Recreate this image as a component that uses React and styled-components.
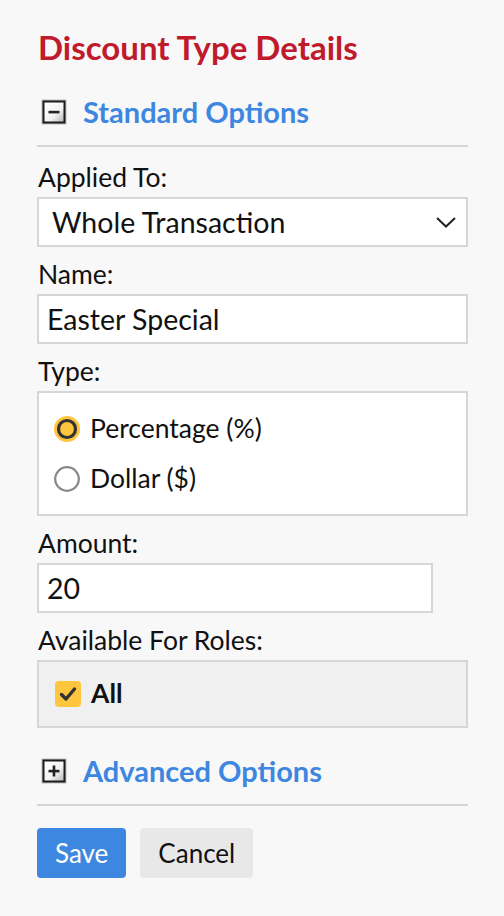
import React, { useState } from 'react'
import styled, { createGlobalStyle } from 'styled-components'

const GlobalStyle = createGlobalStyle`
  html, body {
    margin: 0;
    padding: 0;
    background: #f8f8f8;
  }
  body {
    font-family: Lato, "Open Sans", sans-serif;
    color: #111;
  }
  * { box-sizing: border-box; }
`

const Page = styled.div`
  padding: 27px 36px 40px 37px;
  display: flex;
  flex-direction: column;
`

const Title = styled.h1`
  margin: 0;
  font-size: 33px;
  line-height: 41px;
  font-weight: 700;
  color: #c01a2d;
  padding-left: 1px;
`

const SectionHead = styled.div`
  display: flex;
  align-items: center;
  gap: 16px;
  margin-top: ${p => p.$top}px;
  padding-left: 4px;
  font-size: 29px;
  line-height: 34px;
  font-weight: 700;
  color: #3d87e0;
  cursor: pointer;
`

const Rule = styled.hr`
  border: 0;
  height: 2px;
  background: #d6d6d6;
  margin: 16px 0 0;
`

const Field = styled.div`
  display: flex;
  flex-direction: column;
  margin-top: ${p => p.$top ?? 12}px;
`

const Label = styled.label`
  font-size: 26.5px;
  line-height: 31px;
  margin-bottom: 4px;
  padding-left: 1px;
`

const Box = styled.div`
  border: 2px solid #d6d6d6;
  background: ${p => (p.$grey ? '#f0f0f0' : '#fff')};
  width: ${p => p.$width || '100%'};
`

const SelectBox = styled(Box)`
  height: 50px;
  display: flex;
  align-items: center;
  justify-content: space-between;
  padding: 0 10px 0 13px;
  font-size: 28.5px;
  line-height: 34px;
`

const TextInput = styled.input`
  height: 50px;
  border: 2px solid #d6d6d6;
  background: #fff;
  width: ${p => p.$width || '100%'};
  padding: 0 8px;
  font-family: Lato, "Open Sans", sans-serif;
  font-size: 28.5px;
  color: #111;
  outline: none;
`

const OptionList = styled(Box)`
  display: flex;
  flex-direction: column;
  gap: 19px;
  padding: ${p => p.$pad};
`

const OptionRow = styled.div`
  display: flex;
  align-items: center;
  gap: 10px;
  font-size: 26.5px;
  line-height: 31px;
  font-weight: ${p => (p.$bold ? 700 : 400)};
`

const ButtonRow = styled.div`
  display: flex;
  gap: 14px;
  margin-top: 22px;
`

const Button = styled.button`
  height: 50px;
  padding: 0 18px;
  border: 0;
  border-radius: 4px;
  font-family: Lato, "Open Sans", sans-serif;
  font-size: 26px;
  background: ${p => (p.$primary ? '#3d87e0' : '#e8e8e8')};
  color: ${p => (p.$primary ? '#fff' : '#111')};
`

function ToggleIcon({ open }) {
  const id = open ? 'tg1' : 'tg2'
  return (
    <svg width="26" height="26" viewBox="0 0 26 26">
      <defs>
        <linearGradient id={id} x1="0" y1="0" x2="1" y2="1">
          <stop offset="0" stopColor="#ffffff" />
          <stop offset="0.6" stopColor="#f2f2f2" />
          <stop offset="1" stopColor="#b8b8b8" />
        </linearGradient>
      </defs>
      <rect x="0.5" y="0.5" width="25" height="25" fill="#bbb" />
      <rect x="1.5" y="1.5" width="23" height="23" fill="#1c1c1c" />
      <rect x="3.5" y="3.5" width="19" height="19" fill={`url(#${id})`} />
      <rect x="7.5" y="11.8" width="11" height="2.6" fill="#222" />
      {!open && <rect x="11.7" y="7.5" width="2.6" height="11" fill="#222" />}
    </svg>
  )
}

function Radio({ checked }) {
  return (
    <svg width="26" height="26" viewBox="0 0 26 26">
      {checked ? (
        <>
          <circle cx="13" cy="13" r="13" fill="#fdc63c" />
          <circle cx="13" cy="13" r="8.5" fill="#fdc63c" stroke="#333" strokeWidth="3.2" />
        </>
      ) : (
        <circle cx="13" cy="13" r="11.8" fill="#fff" stroke="#888" strokeWidth="2.2" />
      )}
    </svg>
  )
}

function Check() {
  return (
    <svg width="26" height="26" viewBox="0 0 26 26">
      <rect x="0" y="0" width="26" height="26" rx="4" fill="#fdc63c" />
      <path d="M6.5 13.5 L11 18 L19.5 8" fill="none" stroke="#333" strokeWidth="3.4" strokeLinecap="round" strokeLinejoin="round" />
    </svg>
  )
}

function Chevron() {
  return (
    <svg width="20" height="11" viewBox="0 0 20 11">
      <path d="M1 1 L10 9.5 L19 1" fill="none" stroke="#222" strokeWidth="2" />
    </svg>
  )
}

export default function App() {
  const [type] = useState('percent')
  return (
    <>
      <GlobalStyle />
      <Page>
        <Title>Discount Type Details</Title>

        <SectionHead $top={27}>
          <ToggleIcon open />
          Standard Options
        </SectionHead>
        <Rule />

        <Field $top={15}>
          <Label>Applied To:</Label>
          <SelectBox>
            <span>Whole Transaction</span>
            <Chevron />
          </SelectBox>
        </Field>

        <Field>
          <Label>Name:</Label>
          <TextInput defaultValue="Easter Special" />
        </Field>

        <Field>
          <Label>Type:</Label>
          <OptionList $pad="20px 15px 20px">
            <OptionRow>
              <Radio checked={type === 'percent'} />
              Percentage (%)
            </OptionRow>
            <OptionRow>
              <Radio checked={type === 'dollar'} />
              Dollar ($)
            </OptionRow>
          </OptionList>
        </Field>

        <Field>
          <Label>Amount:</Label>
          <TextInput $width="396px" defaultValue="20" />
        </Field>

        <Field>
          <Label>Available For Roles:</Label>
          <OptionList $grey $pad="16px 16px 17px">
            <OptionRow $bold>
              <Check />
              All
            </OptionRow>
          </OptionList>
        </Field>

        <SectionHead $top={26}>
          <ToggleIcon />
          Advanced Options
        </SectionHead>
        <Rule />

        <ButtonRow>
          <Button $primary>Save</Button>
          <Button>Cancel</Button>
        </ButtonRow>
      </Page>
    </>
  )
}
